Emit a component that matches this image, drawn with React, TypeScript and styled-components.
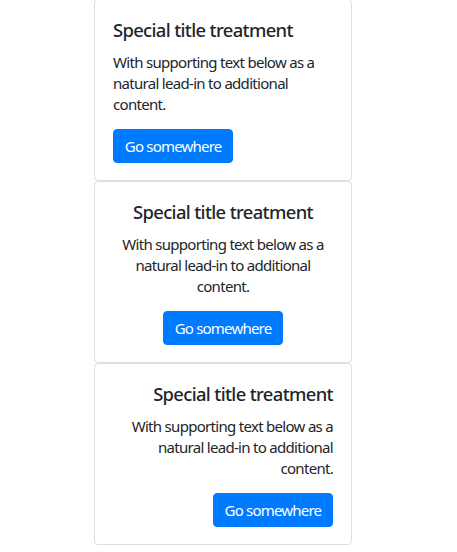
import React from "react";
import styled, { createGlobalStyle } from "styled-components";

const Global = createGlobalStyle`
  html, body { margin: 0; padding: 0; background: #fff; }
  body {
    font-family: "Noto Sans", "Open Sans", sans-serif;
    color: #212529;
    -webkit-font-smoothing: antialiased;
  }
`;

const Stack = styled.div`
  display: flex;
  flex-direction: column;
  width: 258px;
  margin: -1px 0 0 94px;
`;

type Align = "left" | "center" | "right";

const Card = styled.div<{ $align: Align }>`
  box-sizing: border-box;
  height: 182px;
  border: 1px solid rgba(0, 0, 0, 0.125);
  border-radius: 4px;
  padding: 19px 18px 17px;
  display: flex;
  flex-direction: column;
  align-items: ${(p) =>
    p.$align === "left" ? "flex-start" : p.$align === "center" ? "center" : "flex-end"};
  text-align: ${(p) => p.$align};
`;

const Title = styled.h5`
  margin: 0 0 11px;
  font-size: 18.4px;
  font-weight: 500;
  line-height: 22px;
  letter-spacing: -0.65px;
`;

const Text = styled.p`
  margin: 0 0 14px;
  font-size: 15px;
  line-height: 21px;
  letter-spacing: -0.7px;
`;

const Button = styled.a`
  box-sizing: border-box;
  display: inline-block;
  height: 34px;
  padding: 0 10.8px;
  border: 1px solid #007bff;
  border-radius: 4px;
  background: #007bff;
  color: #fff;
  font-size: 15px;
  line-height: 32px;
  letter-spacing: -0.8px;
  text-decoration: none;
  white-space: nowrap;
`;

const aligns: Align[] = ["left", "center", "right"];

export default function App() {
  return (
    <>
      <Global />
      <Stack>
        {aligns.map((a) => (
          <Card key={a} $align={a}>
            <Title>Special title treatment</Title>
            <Text>With supporting text below as a natural lead-in to additional content.</Text>
            <Button href="#">Go somewhere</Button>
          </Card>
        ))}
      </Stack>
    </>
  );
}
